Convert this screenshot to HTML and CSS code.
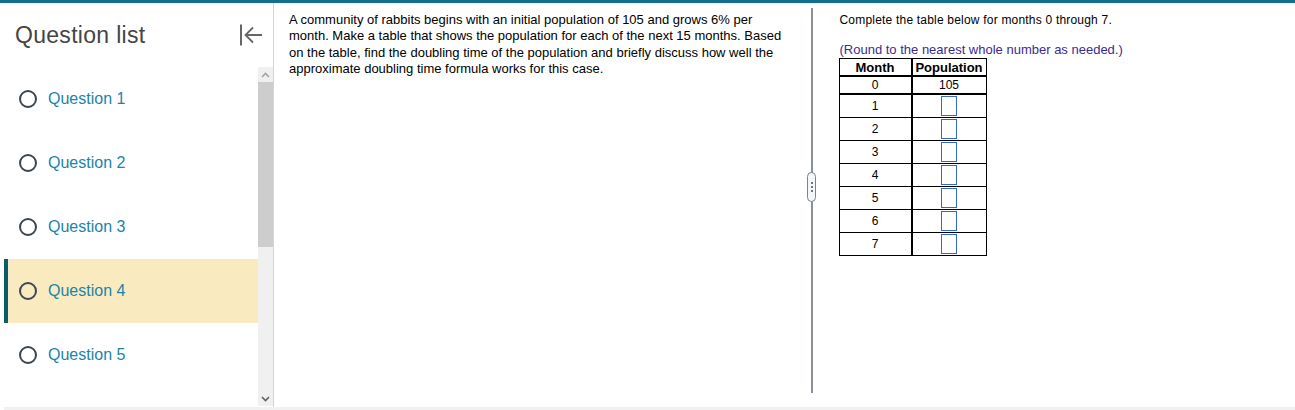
FILE: index.html
```html
<!DOCTYPE html>
<html lang="en">
<head>
  <meta charset="UTF-8">
  <title>Question 4</title>
  <link rel="stylesheet" href="styles.css">
</head>
<body>
  <div class="topbar"></div>
  <div class="main">
    <aside class="sidebar">
      <div class="side-head">
        <span class="side-title">Question list</span>
        <svg class="collapse" width="24" height="24" viewBox="0 0 24 24">
          <path d="M2 1.5v21" stroke="#666" stroke-width="2" fill="none"/>
          <path d="M23 12H7M14 4.5L6.5 12l7.5 7.5" stroke="#666" stroke-width="1.8" fill="none"/>
        </svg>
      </div>
      <div class="side-body">
        <ul class="qlist">
          <li class="qitem"><span class="radio"></span>Question 1</li>
          <li class="qitem"><span class="radio"></span>Question 2</li>
          <li class="qitem"><span class="radio"></span>Question 3</li>
          <li class="qitem current"><span class="radio"></span>Question 4</li>
          <li class="qitem"><span class="radio"></span>Question 5</li>
        </ul>
        <div class="scrollbar">
          <div class="sb-btn">
            <svg width="9" height="6" viewBox="0 0 9 6"><path d="M1 5l3.5-3.5L8 5" stroke="#a3a3a3" stroke-width="1.6" fill="none"/></svg>
          </div>
          <div class="sb-thumb"></div>
          <div class="sb-track"></div>
          <div class="sb-btn">
            <svg width="9" height="6" viewBox="0 0 9 6"><path d="M1 1l3.5 3.5L8 1" stroke="#606060" stroke-width="1.6" fill="none"/></svg>
          </div>
        </div>
      </div>
    </aside>

    <section class="problem">
      <p>A community of rabbits begins with an initial population of 105 and grows 6% per month. Make a table that shows the population for each of the next 15 months. Based on the table, find the doubling time of the population and briefly discuss how well the approximate doubling time formula works for this case.</p>
    </section>

    <div class="divider">
      <div class="handle"><i></i><i></i><i></i></div>
    </div>

    <section class="answer">
      <p class="lead">Complete the table below for months 0 through 7.</p>
      <p class="hint">(Round to the nearest whole number as needed.)</p>
      <table class="pop">
        <thead>
          <tr><th>Month</th><th>Population</th></tr>
        </thead>
        <tbody>
          <tr class="given"><td>0</td><td>105</td></tr>
          <tr><td>1</td><td><span class="box"></span></td></tr>
          <tr><td>2</td><td><span class="box"></span></td></tr>
          <tr><td>3</td><td><span class="box"></span></td></tr>
          <tr><td>4</td><td><span class="box"></span></td></tr>
          <tr><td>5</td><td><span class="box"></span></td></tr>
          <tr><td>6</td><td><span class="box"></span></td></tr>
          <tr><td>7</td><td><span class="box"></span></td></tr>
        </tbody>
      </table>
    </section>
  </div>
  <div class="bottombar"></div>
</body>
</html>
```

FILE: styles.css
```css
body { margin: 0; font-family: 'Liberation Sans', Arial, sans-serif; color: #000; background: #fff; overflow: hidden; }
.topbar { height: 3px; background: #12708f; }
.main { display: flex; height: 404px; }
.bottombar { height: 3px; margin-left: 4px; background: #f1f1f1; }

/* question list */
.sidebar { width: 273px; flex: none; border-right: 1px solid #d4d4d4; display: flex; flex-direction: column; }
.side-head { height: 64px; display: flex; align-items: center; justify-content: space-between; padding: 0 10px 0 15px; }
.side-title { font-size: 23px; letter-spacing: 0.3px; color: #454545; margin-top: 1px; }
.side-body { flex: 1; display: flex; }
.qlist { list-style: none; margin: 0; padding: 0; flex: 1; }
.qitem { height: 64px; display: flex; align-items: center; font-size: 16px; color: #1b84aa; border-left: 4px solid transparent; margin-left: 4px; padding-left: 11px; }
.qitem.current { background: #f9ebbf; border-left-color: #0b5b70; }
.radio { width: 14px; height: 14px; border: 2px solid #3d4752; border-radius: 50%; margin-right: 11px; }
.scrollbar { width: 15px; flex: none; display: flex; flex-direction: column; background: #f0f0f0; height: 339px; }
.sb-btn { height: 15px; display: flex; align-items: center; justify-content: center; }
.sb-thumb { height: 165px; background: #cdcdcd; }
.sb-track { flex: 1; }

/* problem text */
.problem { width: 500px; flex: none; padding: 9px 22px 0 15px; font-size: 13px; line-height: 16.3px; }
.problem p { margin: 0; }

.divider { width: 1.5px; flex: none; background: #8b9099; margin: 5px 0 14px; position: relative; }
.handle { position: absolute; left: -4px; top: 164px; width: 7px; height: 28px; border: 1px solid #7b8391; border-radius: 5px; background: #f5f6f8; display: flex; flex-direction: column; align-items: center; justify-content: center; gap: 2px; }
.handle i { width: 2px; height: 2px; background: #6f7682; }

/* answer side */
.answer { flex: 1; padding: 9px 0 0 27px; font-size: 12px; line-height: 16px; }
.answer p { margin: 0; }
.lead { letter-spacing: 0.2px; margin-bottom: 14px !important; }
.hint { font-size: 13px; color: #3a2c8f; }
.pop { border-collapse: collapse; border: 1px solid #000; margin-left: -1px; }
.pop th, .pop td { border: 1px solid #000; text-align: center; padding: 0; font-size: 12px; }
.pop th { font-size: 13px; font-weight: bold; height: 16px; line-height: 15px; }
.pop th:first-child, .pop td:first-child { width: 71px; border-right: 2px solid #000; }
.pop th:last-child, .pop td:last-child { width: 73px; }
.pop thead tr { border-bottom: 2px solid #000; }
.pop tr.given { border-bottom: 2px solid #000; }
.pop tr.given td { height: 16px; line-height: 15px; }
.pop td { height: 22px; }
.box { display: inline-block; width: 14px; height: 18px; border: 1px solid #3467d1; vertical-align: middle; }
```
